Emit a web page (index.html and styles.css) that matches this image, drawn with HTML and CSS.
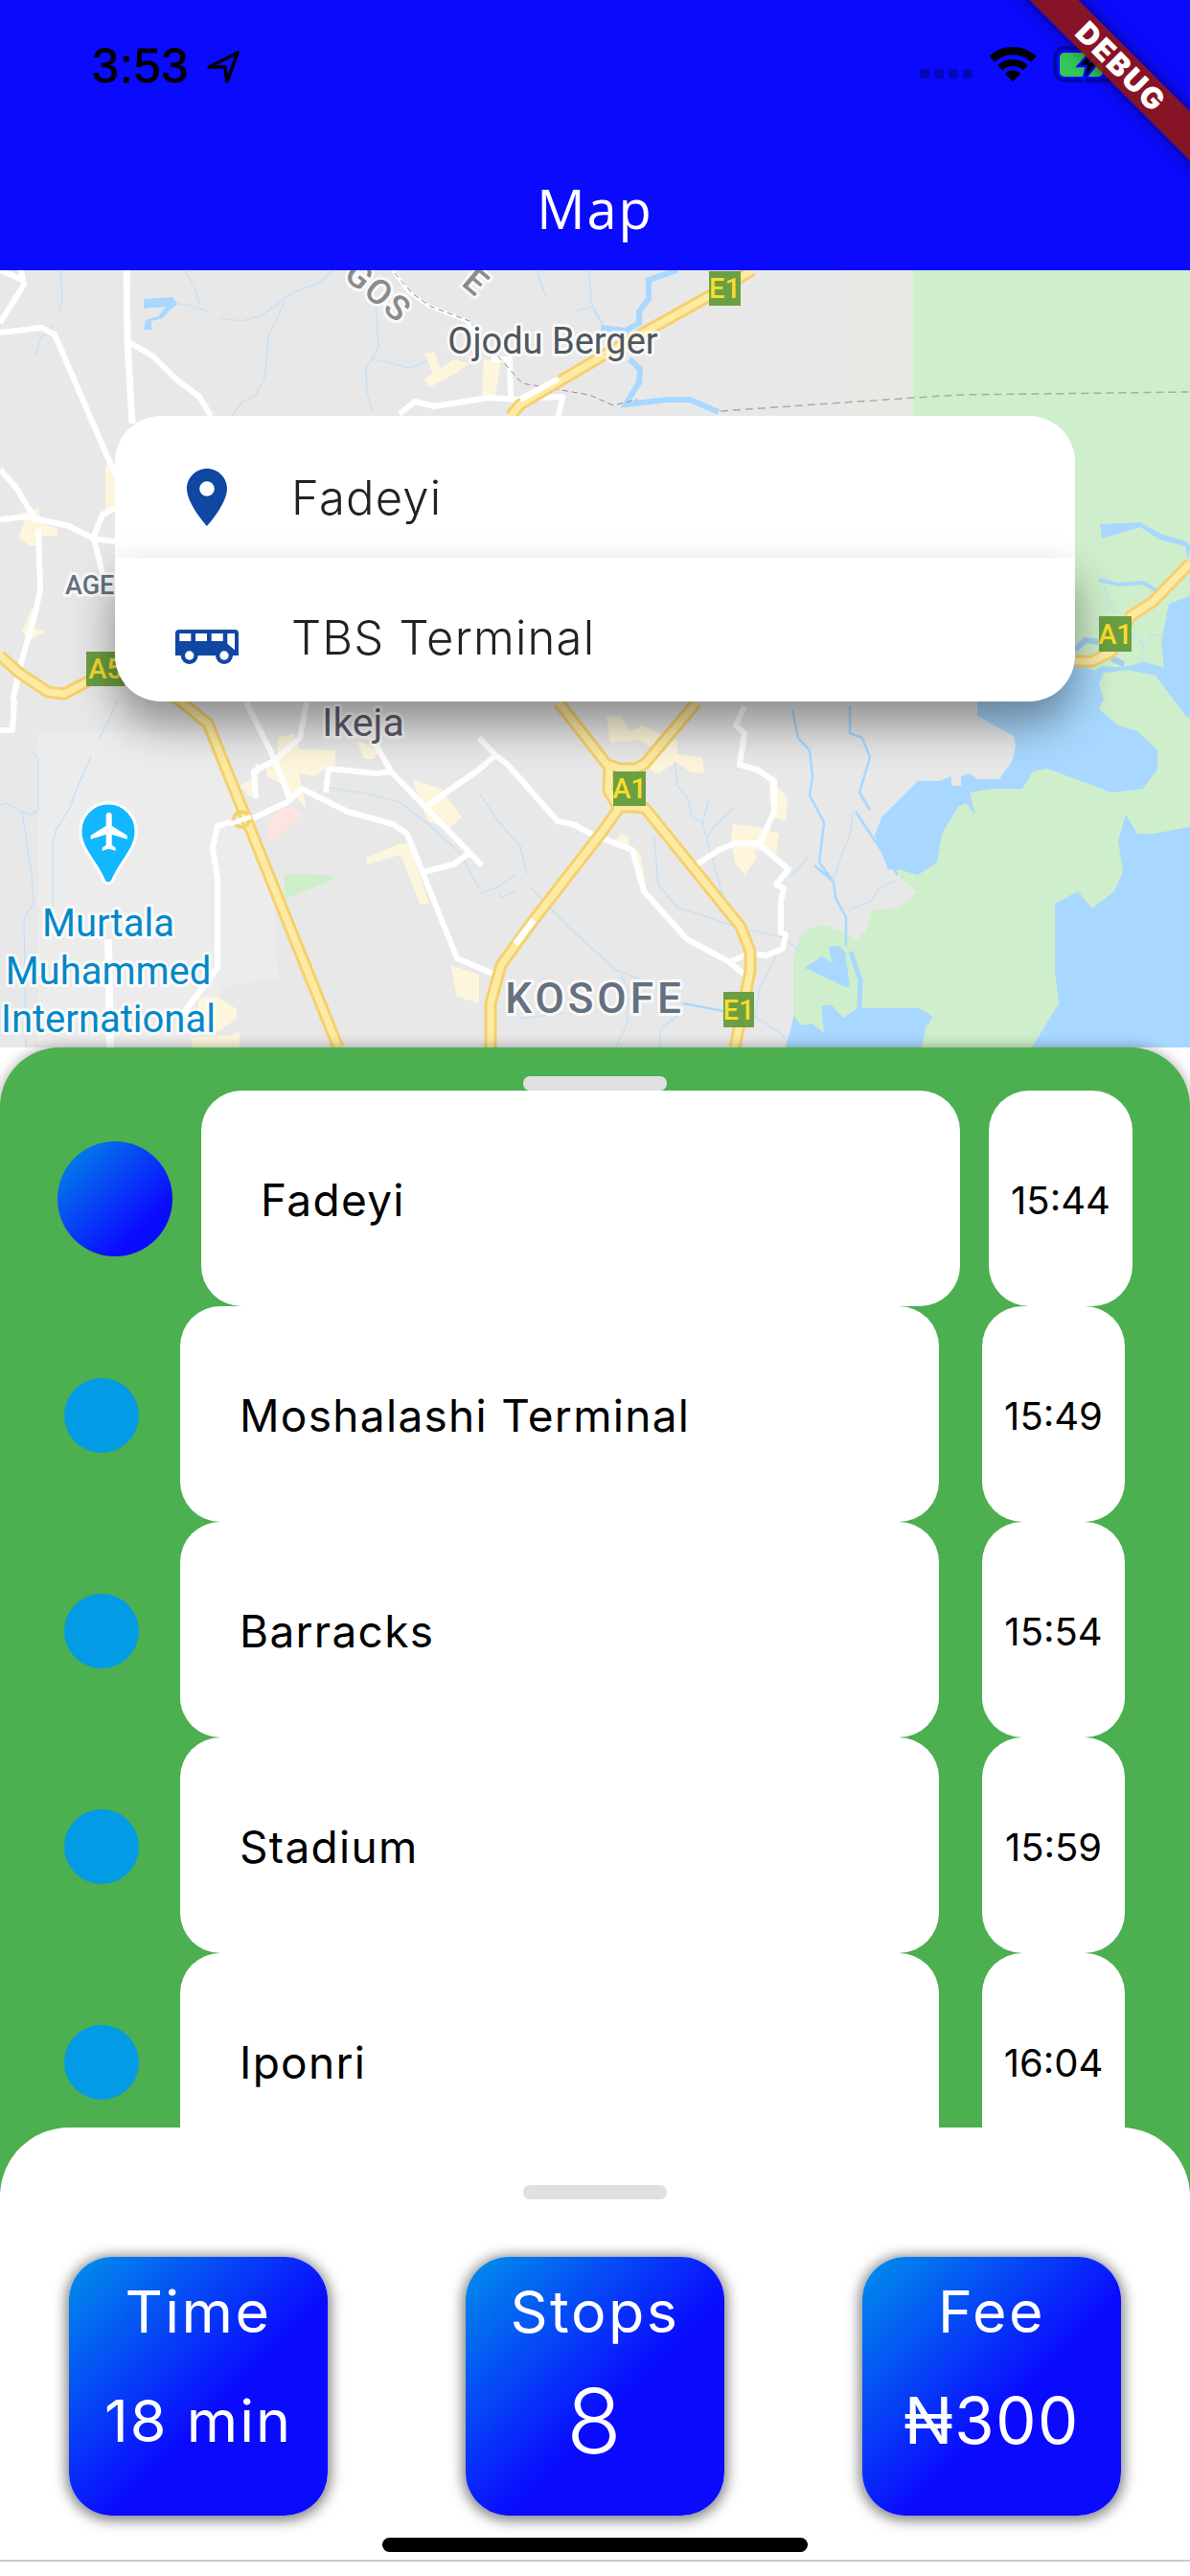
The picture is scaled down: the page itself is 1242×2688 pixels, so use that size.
FILE: index.html
```html
<!DOCTYPE html>
<html lang="en">
<head>
  <meta charset="UTF-8">
  <title>Map</title>
  <meta name="viewport" content="width=device-width, initial-scale=1">
  <link rel="stylesheet" href="styles.css">
</head>
<body>
<div class="screen">

  <!-- Top bar with the status icons -->
  <header class="appbar">
    <div class="statusbar">
      <div class="clock">
        <span>3:53</span>
        <svg class="clock-arrow" width="36" height="36" viewBox="0 0 36 36"><path d="M33 3 3 18h17l2 15z" fill="none" stroke="#000" stroke-width="3.5" stroke-linejoin="round"/></svg>
      </div>
      <div class="status-icons">
        <div class="signal"><i></i><i></i><i></i><i></i></div>
        <svg width="48" height="36" viewBox="0 0 48 36"><path d="M2.2 12.6a32 32 0 0 1 43.6 0" fill="none" stroke="#000" stroke-width="8"/><path d="M10.7 21.7a19.5 19.5 0 0 1 26.6 0" fill="none" stroke="#000" stroke-width="7"/><path d="M16 28a11 11 0 0 1 16 0l-8 8z"/></svg>
        <svg width="72" height="38" viewBox="0 0 72 38"><rect x="2" y="2" width="68" height="34" rx="10" fill="none" stroke="#0505a8" stroke-width="3.5"/><rect x="7" y="7" width="45" height="25" rx="5" fill="#34c759"/><path d="M43 2 26 21h9l-4 16 17-21h-9l6-14z" stroke="#0a0aff" stroke-width="2.5"/></svg>
      </div>
    </div>
    <h1 class="appbar-title">Map</h1>
  </header>

  <!-- Map -->
  <section class="map">
    <svg class="map-art" width="1242" height="811" viewBox="0 282 1242 811">
      <rect x="0" y="282" width="1242" height="811" fill="#e8e8e8"/>
      <rect x="880" y="282" width="73" height="450" fill="#e9e8e3"/>
      <path d="M40 763h185l60 142 5 115-60 10-5 63H40z" fill="#ececec"/>

      <!-- water and parks -->
      <g fill="#a8d8ff">
        <path d="M1020 733V747L1058 768 1060 778 1057 793 1043 813H1020L1012 807 1003 810V820H993V810L980 815H958L940 833 920 853 913 872 927 907 937 908 958 920 1060 1093H1242V600L1020 733z"/>
        <path d="M820 1093 830 1055 857 1048H867L880 1060 895 1050H958L975 1062 965 1093z"/>
      </g>
      <g fill="#cfeecb">
        <path d="M953 282H1242V622L1220 630 1212 670 1215 697 1193 690 1173 697 1150 695 1142 700 1122 690H953z"/>
        <path d="M1000 842 1008 838 1018 850 1012 827 1037 823H1067L1078 805 1093 802 1160 827 1193 823 1208 803V783L1187 763 1167 757 1147 740 1152 730 1147 713 1153 700 1177 697 1207 703 1242 750V863L1203 870H1187L1175 850 1167 877 1172 910 1163 930 1140 948 1125 930 1101 943V1013L1105 1047 1077 1093H962L966 1073 974 1060 958 1052H895L880 1062 867 1048 857 1050 860 1078 848 1068 836 1070 828 1060V997L837 973 858 965 883 973 892 982 903 972 910 950 940 947 957 930 940 917 937 907 958 913 978 900 983 870z"/>
        <path d="M297 912 347 913 348 918 297 938z"/>
      </g>
      <g fill="#a8d8ff">
        <path d="M1148 547 1150 562 1190 550 1210 563 1237 570 1240 585 1242 570 1238 565 1212 557 1190 545z"/>
        <path d="M840 1010 858 998 868 1005 865 988 875 987 882 993 887 1030 883 1030z"/>
        <path d="M150 312 180 310 185 317 177 324 170 332 158 335V344H150L152 334 165 330 173 320 150 322z"/>
      </g>
      <g fill="none" stroke="#a8d8ff">
        <path d="M707 282 677 292V312L667 325V337L653 345 627 342M657 375 668 385 667 399 653 422 697 417H720L750 430" stroke-width="6"/>
        <path d="M1147 605 1167 610 1193 608 1210 618M1153 700 1177 697 1207 703 1240 747" stroke-width="4"/>
        <path d="M888 993 898 1023 897 1052" stroke-width="5"/>
        <path d="M1122 678 1133 668 1147 670M1160 687 1173 693" stroke-width="6" stroke="#a4cfee"/>
        <path d="M827 740 833 770 845 783 848 810 845 830 860 858 855 900 870 920M887 737V765L900 770 908 790 897 827 908 845M850 903 870 920 872 937 883 957V987M893 847 937 913" stroke-width="2.5"/>
        <path d="M713 1047 755 1055" stroke-width="2.5"/>
      </g>
      <g fill="none" stroke="#c0e0fa" stroke-width="1.2">
        <path d="M185 317 200 319 217 325M230 332 253 335 273 329 307 305 333 295 347 282M297 315 280 352 277 392 267 412 252 420 242 434M392 315 395 362 382 385 383 409 388 429M388 374 428 384 450 375M63 282 65 312 62 325M57 339 43 352 37 372M193 282 203 299 208 317"/>
        <path d="M32 782 40 793V845L33 850 22 847 7 838 0 840M23 847 33 913 35 943 25 957 27 1093M95 790 80 823 73 843 58 867 55 880V947M123 730 113 753 103 772M343 822 383 828 417 837 447 860 480 890 500 927"/>
        <path d="M500 827 520 857 543 883 550 912M555 927 593 967 643 1012 680 1027 713 1047M647 1017 655 1030V1067L643 1092M500 932 517 927 540 912M520 930 523 937 538 930M683 873 687 923 707 947 733 955 767 967 817 978 840 997M703 780 707 820 718 833 722 853 733 858 753 930V943M767 842 745 863 737 875M740 833 733 860"/>
        <path d="M890 847 888 867 870 917M843 895 825 915M885 950 910 940 917 927 937 918M810 997 793 1030 788 1063M787 1060 817 1080 822 1087M707 1060 690 1073 688 1093M543 1063 590 1057M1152 610 1163 640V645L1183 663 1193 673 1190 693M1193 673 1205 662 1212 663"/>
        <path d="M560 282 570 310M615 282 617 315 630 340 617 320 600 325"/>
      </g>

      <!-- built up areas -->
      <g fill="#fdf6dc">
        <path d="M443 369 453 367 460 385 473 375 490 379 477 389 457 399 448 405 443 395 452 389z"/>
        <path d="M505 375 523 377 517 412H503z"/>
        <path d="M110 485H120V530L110 540z"/>
        <path d="M22 535 40 530 42 545 60 552V559H40L38 569H30L20 560 25 545z"/>
        <path d="M33 635H42L33 655 47 659 30 669 23 659z"/>
        <path d="M290 770 307 765 313 782 350 783V798L343 800 328 810 312 807 320 845 310 833 300 830 292 817 278 810V800L267 797 263 833 250 820 263 813 290 790z"/>
        <path d="M373 773 397 783 390 792H380z"/>
        <path d="M430 813 460 823 482 853 467 865 447 857 440 840z"/>
        <path d="M382 895 418 880H427L448 943H438L418 892 383 902z"/>
        <path d="M470 1007 500 1017V1047L477 1040z"/>
        <path d="M207 1042 227 1040 247 1053V1063L227 1077 207 1063z"/>
        <path d="M240 1080 250 1077V1093H200V1083z"/>
        <path d="M633 747H647L658 763 670 757 707 773V787L733 790 735 807 720 805 705 795 687 808 673 800 682 780 667 772 637 775z"/>
        <path d="M803 810 822 833 820 857 808 853 803 833z"/>
        <path d="M765 860 790 863 813 870 810 890 787 887 790 895 777 913 767 900 763 873z"/>
        <path d="M647 870 655 873 657 883 643 877z"/>
        <path d="M660 885 668 890 675 930 665 920z"/>
      </g>
      <path d="M293 843 307 842 317 850 300 863 283 880 278 873 283 853z" fill="#fde4e0"/>

      <!-- small roads -->
      <g fill="none" stroke="#fff" stroke-width="6" stroke-linejoin="round">
        <path d="M0 337 25 297 22 282M0 282 23 292M0 347 43 342 57 349 120 495"/>
        <path d="M132 282 133 355 138 442" stroke-width="7"/>
        <path d="M135 357 160 372 183 395 208 414 220 434M0 490 17 509 35 539M0 542 27 539 72 549 98 562 120 565M98 559 107 537 120 530M98 562 107 599M40 552 42 615 37 639 22 692 13 732"/>
        <path d="M15 730 13 762H0"/>
        <path d="M417 432 433 419 453 424 510 415 543 417 583 395M563 415 587 414 583 434M513 375H532L533 414"/>
        <path d="M240 858 227 862 222 885 227 917V1010L187 1063M257 857 300 837 315 823 363 847 410 860 425 870 477 1000 517 1017M257 733 287 793 302 833M267 833 265 805 287 793 313 770 320 733M340 827 343 802 393 807 408 805M390 773 408 805 503 903M442 910 473 902 490 890M447 840 500 803 517 788"/>
        <path d="M113 980 115 1093" stroke-width="8"/>
        <path d="M500 770 517 788 530 798 582 857 598 860 617 870 660 887 672 930 717 980 760 1003 777 1017"/>
        <path d="M777 737 768 757 777 765 772 798 790 803 808 815V847L793 880H767L750 887 723 905M793 882 823 907 810 923 818 927 815 940V973L820 975 817 990 800 997 783 995 763 1003"/>
      </g>
      <path d="M410 282 427 305 447 319 487 335 493 345" fill="none" stroke="#fff" stroke-width="4"/>
      <path d="M412 285 430 306 450 320 490 335M520 372 545 400 615 412 640 423 665 417" fill="none" stroke="#8e8e8e" stroke-width="1" stroke-dasharray="6 4"/>
      <path d="M752 429 880 420 1000 412 1242 409" fill="none" stroke="#aaa" stroke-width="1.5" stroke-dasharray="8 5"/>

      <!-- motorways -->
      <g fill="none" stroke-linejoin="round">
        <g stroke="#f6d06e" stroke-width="13">
          <path d="M533 434 543 422 633 369 740 309 785 282"/>
          <path d="M0 684 20 702 50 722 67 724 90 712 130 690 190 733 217 755 353 1093"/>
          <path d="M512 1093V1047L523 1007 557 960 627 870 647 842 660 842 673 843 773 967 783 993V1013L767 1093"/>
          <path d="M583 733 633 797 647 802H663L673 797 727 733M636 800 635 825 645 842"/>
          <path d="M1122 690H1140L1160 680 1180 643 1203 628 1242 588"/>
        </g>
        <g stroke="#fdeba3" stroke-width="7">
          <path d="M533 434 543 422 633 369 740 309 785 282"/>
          <path d="M0 684 20 702 50 722 67 724 90 712 130 690 190 733 217 755 353 1093"/>
          <path d="M512 1093V1047L523 1007 557 960 627 870 647 842 660 842 673 843 773 967 783 993V1013L767 1093"/>
          <path d="M583 733 633 797 647 802H663L673 797 727 733M636 800 635 825 645 842"/>
          <path d="M1122 690H1140L1160 680 1180 643 1203 628 1242 588"/>
        </g>
        <path d="M557 960 538 985" stroke="#fff" stroke-width="7"/>
        <path d="M543 417 583 395" stroke="#fff" stroke-width="6"/>
        <circle cx="252" cy="855" r="8" stroke="#f6d06e" stroke-width="4"/>
        <path d="M240 860 262 852" stroke="#fff" stroke-width="5"/>
      </g>

      <!-- road shields -->
      <g fill="#6b9f43">
        <rect x="740" y="283" width="33" height="36"/>
        <rect x="90" y="680" width="40" height="36"/>
        <rect x="1147" y="643" width="34" height="37"/>
        <rect x="640" y="805" width="34" height="36"/>
        <rect x="755" y="1035" width="32" height="37"/>
      </g>
      <g class="shield-text">
        <text x="756.500" y="311">E1</text>
        <text x="110" y="708">A5</text>
        <text x="1164" y="672">A1</text>
        <text x="657" y="833">A1</text>
        <text x="771" y="1064">E1</text>
      </g>

      <!-- place names -->
      <text class="label label-town" x="577" y="369">Ojodu Berger</text>
      <text class="label label-road" transform="translate(387 314) rotate(40)">GOS</text>
      <text class="label label-road" transform="translate(489 304) rotate(40)">E</text>
      <text class="label label-area label-age" x="68" y="620">AGE</text>
      <text class="label label-town label-ikeja" x="379" y="768">Ikeja</text>
      <text class="label label-area label-kosofe" x="621" y="1057">KOSOFE</text>
      <text class="label label-airport" x="113" y="977">Murtala</text>
      <text class="label label-airport" x="113" y="1027">Muhammed</text>
      <text class="label label-airport" x="113" y="1077">International</text>

      <!-- airport pin -->
      <path d="M113 838a29 29 0 0 1 29 30c0 18-17 32-24 50-2 5-8 5-10 0-7-18-24-32-24-50a29 29 0 0 1 29-30z" fill="#12b7ff" stroke="#fff" stroke-width="3"/>
      <path transform="translate(90.700 843.700) scale(2)" d="M21 16v-2l-8-5V3.500c0-.83-.67-1.500-1.500-1.500S10 2.670 10 3.500V9l-8 5v2l8-2.500V19l-2 1.500V22l3.500-1 3.500 1v-1.500L13 19v-5.500l8 2.500z" fill="#fff"/>
    </svg>

    <!-- Route card over the map -->
    <div class="route-card">
      <div class="route-row route-from">
        <svg class="route-icon" width="72" height="72" viewBox="0 0 24 24"><path d="M12 2C8.130 2 5 5.130 5 9c0 5.250 7 13 7 13s7-7.750 7-13c0-3.870-3.130-7-7-7zm0 9.600a2.600 2.600 0 1 1 0-5.200 2.600 2.600 0 0 1 0 5.200z" fill="#0f47a1"/></svg>
        <span>Fadeyi</span>
      </div>
      <div class="route-row route-to">
        <svg class="route-icon route-bus" width="66" height="36" viewBox="0 0 66 36">
          <path d="M0 4a4 4 0 0 1 4-4h58a4 4 0 0 1 4 4v23H0z" fill="#0f47a1"/>
          <path d="M4.300 4h12v8h-12zM21 4h12v8H21zM37.700 4h12v8h-12zM54.300 4H62v17.300l-7.700-6.600z" fill="#fff"/>
          <circle cx="14.700" cy="27" r="9" fill="#0f47a1"/><circle cx="51" cy="27" r="9" fill="#0f47a1"/>
          <circle cx="14.700" cy="27" r="4.700" fill="#fff"/><circle cx="51" cy="27" r="4.700" fill="#fff"/>
        </svg>
        <span>TBS Terminal</span>
      </div>
    </div>
  </section>

  <!-- Stops list -->
  <section class="stops-sheet">
    <div class="handle"></div>
    <div class="stop stop-active">
      <span class="stop-dot"></span>
      <div class="stop-name">Fadeyi</div>
      <div class="stop-time">15:44</div>
    </div>
    <div class="stop">
      <span class="stop-dot"></span>
      <div class="stop-name">Moshalashi Terminal</div>
      <div class="stop-time">15:49</div>
    </div>
    <div class="stop">
      <span class="stop-dot"></span>
      <div class="stop-name">Barracks</div>
      <div class="stop-time">15:54</div>
    </div>
    <div class="stop">
      <span class="stop-dot"></span>
      <div class="stop-name">Stadium</div>
      <div class="stop-time">15:59</div>
    </div>
    <div class="stop">
      <span class="stop-dot"></span>
      <div class="stop-name">Iponri</div>
      <div class="stop-time">16:04</div>
    </div>
  </section>

  <!-- Trip summary -->
  <section class="summary-sheet">
    <div class="handle"></div>
    <div class="summary-tiles">
      <div class="tile">
        <div class="tile-title">Time</div>
        <div class="tile-value">18 min</div>
      </div>
      <div class="tile">
        <div class="tile-title">Stops</div>
        <div class="tile-value tile-value-big">8</div>
      </div>
      <div class="tile">
        <div class="tile-title">Fee</div>
        <div class="tile-value tile-value-fee">₦300</div>
      </div>
    </div>
    <div class="home-indicator"></div>
  </section>

  <div class="debug-banner">DEBUG</div>
</div>
</body>
</html>
```

FILE: styles.css
```css
/* Page */
body {
  margin: 0;
  background: #fff;
  font-family: Inter, "Open Sans", sans-serif;
}

.screen {
  position: relative;
  display: flex;
  flex-direction: column;
  width: 1242px;
  height: 2688px;
  overflow: hidden;
}

/* App bar */
.appbar {
  flex: none;
  height: 282px;
  background: #0a0aff;
  color: #fff;
}

.statusbar {
  display: flex;
  justify-content: space-between;
  align-items: flex-start;
  padding: 41px 71px 0 96px;
  height: 60px;
  color: #000;
}

.clock {
  display: flex;
  align-items: center;
  gap: 18px;
  font-family: "Liberation Sans", sans-serif;
  font-size: 50px;
  line-height: 56px;
  letter-spacing: 1px;
  -webkit-text-stroke: 0.8px #000;
}

.clock-arrow {
  margin-top: 2px;
}

.status-icons {
  display: flex;
  align-items: center;
  gap: 18px;
  margin-top: 7px;
}

.signal {
  display: flex;
  gap: 5px;
  margin-top: 20px;
}

.signal i {
  width: 10px;
  height: 10px;
  border-radius: 3px;
  background: #0707b8;
}

.appbar-title {
  margin: 0;
  padding-top: 81px;
  text-align: center;
  font-family: "Open Sans", sans-serif;
  font-size: 56px;
  font-weight: 400;
  line-height: 70px;
  letter-spacing: 2px;
}

/* Map */
.map {
  position: relative;
  flex: none;
  height: 811px;
}

.map-art {
  display: block;
}

.shield-text text {
  font-family: Roboto, sans-serif;
  font-size: 29px;
  font-weight: 500;
  fill: #fbdc2b;
  text-anchor: middle;
}

.label {
  font-family: Roboto, sans-serif;
  text-anchor: middle;
  paint-order: stroke;
  stroke: #fff;
  stroke-opacity: 0.75;
  stroke-width: 6px;
  stroke-linejoin: round;
}

.label-age {
  font-size: 27px;
  text-anchor: start;
}

.label-town {
  font-size: 38px;
  fill: #50575e;
}

.label-ikeja {
  font-size: 41px;
  fill: #5f5b6c;
}

.label-road {
  font-size: 36px;
  font-weight: 500;
  letter-spacing: 2px;
  fill: #8b8b8b;
}

.label-area {
  font-weight: 500;
  fill: #64717f;
}

.label-kosofe {
  font-size: 44px;
  letter-spacing: 4px;
}

.label-airport {
  font-size: 40px;
  fill: #0288c9;
}

/* Route card */
.route-card {
  position: absolute;
  top: 152px;
  left: 120px;
  width: 1002px;
  font-size: 49px;
  font-weight: 300;
  letter-spacing: 1.2px;
  color: #222;
}

.route-row {
  display: flex;
  align-items: center;
  box-sizing: border-box;
  padding-left: 60px;
  background: #fff;
}

.route-row span {
  margin-left: 52px;
}

.route-from {
  height: 148px;
  padding-top: 22px;
  border-radius: 48px 48px 0 0;
}

.route-to {
  position: relative;
  height: 150px;
  padding-top: 16px;
  border-radius: 0 0 48px 48px;
  box-shadow: 0 24px 46px rgba(0, 0, 0, 0.4);
}

.route-bus {
  margin: 20px 3px 0;
}

/* Stops sheet */
.stops-sheet {
  position: relative;
  flex: none;
  box-sizing: border-box;
  height: 1199px;
  padding-top: 45px;
  overflow: hidden;
  background: #4caf50;
  border-radius: 62px 62px 0 0;
  box-shadow: 0 0 14px rgba(0, 0, 0, 0.35);
}

.handle {
  position: absolute;
  left: 546px;
  width: 150px;
  height: 15px;
  border-radius: 7px;
  background: #e0e0e0;
}

.stops-sheet .handle {
  top: 30px;
}

.summary-sheet .handle {
  top: 60px;
}

.stop {
  display: flex;
  align-items: center;
  height: 225px;
  padding-left: 67px;
}

.stop-dot {
  flex: none;
  width: 78px;
  height: 78px;
  margin-right: 43px;
  margin-top: 3px;
  border-radius: 50%;
  background: #039be5;
}

.stop-name,
.stop-time {
  display: flex;
  align-items: center;
  box-sizing: border-box;
  height: 100%;
  padding-top: 3px;
  background: #fff;
  border-radius: 42px;
  color: #000;
}

.stop-name {
  flex: none;
  width: 792px;
  padding-left: 62px;
  font-size: 46px;
  letter-spacing: 1.3px;
}

.stop-time {
  flex: none;
  justify-content: center;
  width: 149px;
  margin-left: 45px;
  font-size: 40px;
}

.stop-active {
  padding-left: 60px;
}

.stop-active .stop-dot {
  width: 120px;
  height: 120px;
  margin-top: 1px;
  margin-right: 30px;
  background: linear-gradient(135deg, #0390e6, #0a0aff 75%);
}

.stop-active .stop-time {
  width: 150px;
  margin-left: 30px;
}

/* Summary sheet */
.summary-sheet {
  position: relative;
  flex: none;
  box-sizing: border-box;
  height: 453px;
  margin-top: -72px;
  padding-top: 135px;
  background: #fff;
  border-radius: 72px 72px 0 0;
  border-bottom: 2px solid #ccc;
}

.summary-tiles {
  display: flex;
  justify-content: space-between;
  padding: 0 72px;
}

.tile {
  box-sizing: border-box;
  width: 270px;
  height: 270px;
  padding-top: 18px;
  border-radius: 45px;
  background: linear-gradient(135deg, #0091ea, #0a0aff 58%);
  box-shadow: 0 2px 14px 3px rgba(0, 0, 0, 0.5);
  color: #fff;
  text-align: center;
}

.tile-title {
  height: 78px;
  font-size: 61px;
  line-height: 78px;
  letter-spacing: 2.5px;
}

.tile-value {
  margin-top: 36px;
  font-size: 61px;
  line-height: 78px;
  letter-spacing: 2px;
}

.tile-value-big {
  font-size: 94px;
  font-weight: 300;
}

.tile-value-fee {
  font-size: 67px;
  letter-spacing: 1.5px;
}

.home-indicator {
  position: absolute;
  left: 399px;
  bottom: 8px;
  width: 444px;
  height: 15px;
  border-radius: 8px;
  background: #000;
}

/* Flutter debug ribbon */
.debug-banner {
  position: absolute;
  top: 52px;
  left: 1020px;
  width: 300px;
  height: 36px;
  transform: rotate(45deg);
  background: rgba(145, 20, 22, 0.93);
  box-shadow: 0 0 18px rgba(0, 0, 0, 0.5);
  color: #fff;
  text-align: center;
  font-family: Inter, sans-serif;
  font-size: 31px;
  font-weight: 900;
  line-height: 35px;
  letter-spacing: 2px;
}
```
